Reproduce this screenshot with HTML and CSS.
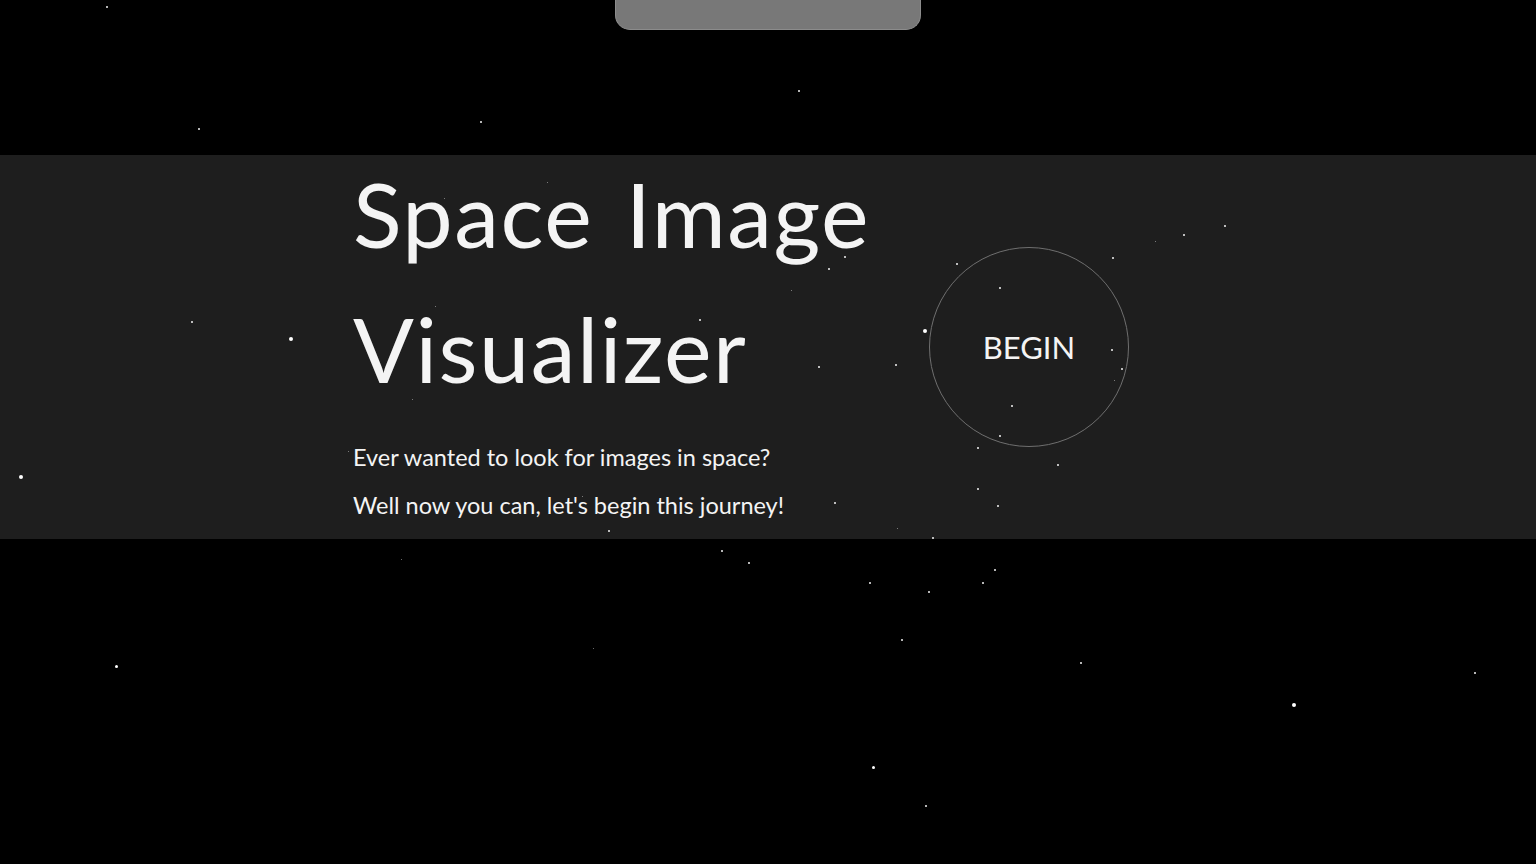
FILE: index.html
```html
<!DOCTYPE html>
<html lang="en">
<head>
<meta charset="utf-8">
<title>Space Image Visualizer</title>
<link rel="stylesheet" href="styles.css">
</head>
<body>
<div class="page">
  <header class="top">
    <div class="tab"></div>
  </header>
  <section class="hero">
    <div class="intro">
      <h1 class="title">Space Image<br>Visualizer</h1>
      <p class="lead">Ever wanted to look for images in space?</p>
      <p class="lead">Well now you can, let's begin this journey!</p>
    </div>
    <button class="begin" type="button">BEGIN</button>
  </section>
  <div class="stars" aria-hidden="true">
    <span class="star s2" style="left:106px;top:6px"></span>
    <span class="star s2" style="left:198px;top:128px"></span>
    <span class="star s2" style="left:480px;top:121px"></span>
    <span class="star s2" style="left:798px;top:90px"></span>
    <span class="star s2" style="left:191px;top:321px"></span>
    <span class="star s4" style="left:289px;top:337px"></span>
    <span class="star s4" style="left:19px;top:475px"></span>
    <span class="star s1" style="left:348px;top:451px"></span>
    <span class="star s1" style="left:547px;top:182px"></span>
    <span class="star s1" style="left:444px;top:198px"></span>
    <span class="star s1" style="left:435px;top:306px"></span>
    <span class="star s1" style="left:412px;top:399px"></span>
    <span class="star s2" style="left:699px;top:319px"></span>
    <span class="star s1" style="left:686px;top:343px"></span>
    <span class="star s1" style="left:582px;top:496px"></span>
    <span class="star s2" style="left:844px;top:256px"></span>
    <span class="star s2" style="left:828px;top:268px"></span>
    <span class="star s1" style="left:791px;top:290px"></span>
    <span class="star s4" style="left:923px;top:329px"></span>
    <span class="star s2" style="left:818px;top:366px"></span>
    <span class="star s2" style="left:895px;top:364px"></span>
    <span class="star s2" style="left:834px;top:502px"></span>
    <span class="star s1" style="left:897px;top:528px"></span>
    <span class="star s2" style="left:932px;top:537px"></span>
    <span class="star s2" style="left:956px;top:263px"></span>
    <span class="star s2" style="left:999px;top:287px"></span>
    <span class="star s2" style="left:1011px;top:405px"></span>
    <span class="star s2" style="left:999px;top:435px"></span>
    <span class="star s2" style="left:977px;top:447px"></span>
    <span class="star s2" style="left:977px;top:488px"></span>
    <span class="star s2" style="left:997px;top:505px"></span>
    <span class="star s2" style="left:1057px;top:464px"></span>
    <span class="star s2" style="left:1224px;top:225px"></span>
    <span class="star s2" style="left:1183px;top:234px"></span>
    <span class="star s1" style="left:1155px;top:241px"></span>
    <span class="star s2" style="left:1112px;top:257px"></span>
    <span class="star s2" style="left:1111px;top:349px"></span>
    <span class="star s2" style="left:1121px;top:368px"></span>
    <span class="star s1" style="left:1114px;top:380px"></span>
    <span class="star s2" style="left:608px;top:530px"></span>
    <span class="star s2" style="left:721px;top:550px"></span>
    <span class="star s2" style="left:748px;top:562px"></span>
    <span class="star s2" style="left:869px;top:582px"></span>
    <span class="star s2" style="left:928px;top:591px"></span>
    <span class="star s2" style="left:982px;top:582px"></span>
    <span class="star s2" style="left:994px;top:569px"></span>
    <span class="star s2" style="left:901px;top:639px"></span>
    <span class="star s1" style="left:593px;top:648px"></span>
    <span class="star s3" style="left:872px;top:766px"></span>
    <span class="star s2" style="left:925px;top:805px"></span>
    <span class="star s2" style="left:1080px;top:662px"></span>
    <span class="star s2" style="left:1474px;top:672px"></span>
    <span class="star s4" style="left:1292px;top:703px"></span>
    <span class="star s1" style="left:401px;top:559px"></span>
    <span class="star s3" style="left:115px;top:665px"></span>
  </div>
</div>
</body>
</html>
```

FILE: styles.css
```css
html, body {
  margin: 0;
  padding: 0;
  background: #000;
}

body {
  font-family: Lato, "Open Sans", "Noto Sans", sans-serif;
  color: #f2f2f2;
}

.page {
  position: relative;
  width: 100%;
  height: 864px;
  overflow: hidden;
  background: #000;
}

.top {
  height: 155px;
  display: flex;
  justify-content: center;
  align-items: flex-start;
}

.tab {
  width: 304px;
  height: 29px;
  background: #787878;
  border: 1px solid #8c8c8c;
  border-top: none;
  border-radius: 0 0 15px 15px;
}

.hero {
  height: 384px;
  background: #1e1e1e;
  display: flex;
  align-items: center;
  padding-left: 353px;
  box-sizing: border-box;
}

.intro {
  align-self: flex-start;
  width: 520px;
  margin-top: -9px;
}

.title {
  margin: 0;
  font-weight: 400;
  font-size: 90px;
  line-height: 135px;
  color: #f4f4f4;
  letter-spacing: 1.5px;
  word-spacing: 8px;
}

.lead {
  margin: 0;
  font-size: 23.5px;
  line-height: 48px;
  color: #f4f4f4;
}

.title + .lead {
  margin-top: 17px;
}

.begin {
  margin-left: 56px;
  width: 200px;
  height: 200px;
  border-radius: 50%;
  border: 1px solid #6f6f6f;
  background: transparent;
  color: #f4f4f4;
  font-family: inherit;
  font-size: 31px;
  padding: 0;
  display: flex;
  align-items: center;
  justify-content: center;
  cursor: pointer;
}

.stars {
  position: absolute;
  inset: 0;
  pointer-events: none;
}

.star {
  position: absolute;
  border-radius: 50%;
  background: #fff;
}

.s1 { width: 1px; height: 1px; opacity: 0.55; }
.s2 { width: 2px; height: 2px; opacity: 0.95; }
.s3 { width: 3px; height: 3px; }
.s4 { width: 4px; height: 4px; }
```
